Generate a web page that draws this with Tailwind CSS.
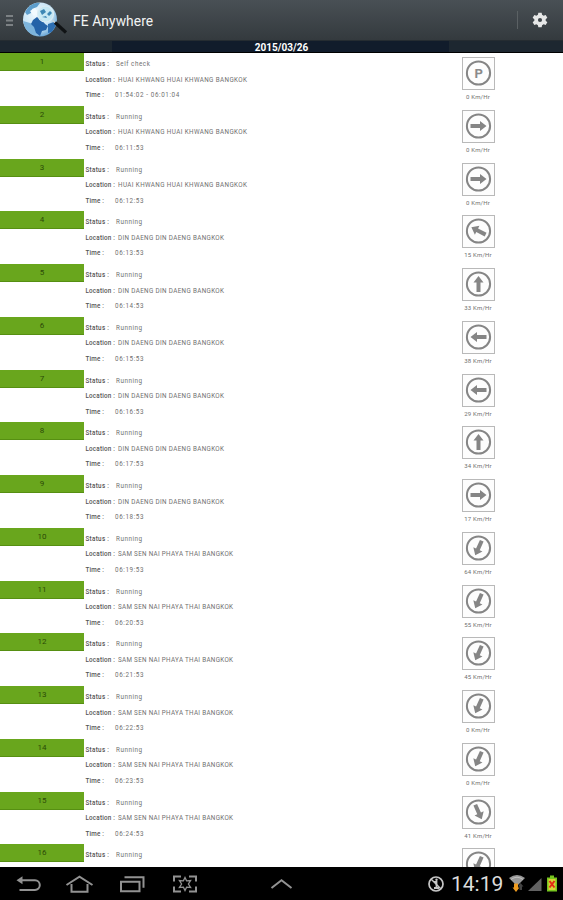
<!DOCTYPE html>
<html lang="en">
<head>
  <meta charset="UTF-8">
  <meta name="viewport" content="width=device-width, initial-scale=1.0">
  <title>FE Anywhere</title>
  <script src="https://cdn.jsdelivr.net/npm/@tailwindcss/browser@4"></script>
</head>
<body class="bg-black h-[900px] w-[563px] overflow-hidden flex flex-col select-none" style="font-family: Roboto, 'Liberation Sans', sans-serif;">
  <!-- Action bar -->
  <header class="h-10 shrink-0 flex items-center bg-linear-to-b from-[#495055] to-[#343a3e]">
    <svg class="ml-1.5 w-[7px] h-[13px] shrink-0" viewBox="0 0 7 13" fill="#7c8184">
      <rect y="1" width="7" height="2"/><rect y="5.5" width="7" height="2"/><rect y="10" width="7" height="2"/>
    </svg>
    <svg class="ml-[9px] w-[46px] h-10 shrink-0" viewBox="0 0 46 40">
      <defs>
        <radialGradient id="globe" cx=".4" cy=".35" r=".7">
          <stop offset="0" stop-color="#f2faff"/><stop offset=".65" stop-color="#c5e2f4"/><stop offset="1" stop-color="#5f9ed0"/>
        </radialGradient>
        <clipPath id="disc"><circle cx="18" cy="19.5" r="17"/></clipPath>
      </defs>
      <circle cx="18" cy="19.5" r="17" fill="url(#globe)"/>
      <g clip-path="url(#disc)">
        <path d="M3 12L7 6l7-4 4 1-3 4-5 2-1 4-4 2z" fill="#5d9dcb"/>
        <path d="M1 21l7 2 5 2 3 4-1 4-4 4-7-5z" fill="#7db4dc"/>
        <path d="M11 20l4-3 5 3 3 4 3 2-2 4-4 1-2 5-4-3-2-6-3-3z" fill="#2563a8"/>
        <path d="M26 24l6-2 2 3-4 7-4 1z" fill="#2e6fb2"/>
        <path d="M8 11l5-3 3 4-4 4z" fill="#f3fafe"/>
      </g>
      <circle cx="23.500" cy="14" r="8" fill="#c3e7f3" fill-opacity=".8" stroke="#dcecf3" stroke-width="1.200"/>
      <path d="M18 11l4-2 2 3-4 3zM25 14l3-3 2 2-3 3zM20 17l4-1 1 2z" fill="#3d87b5"/>
      <path d="M30.500 20.500l3 2.500" stroke="#cbd2d5" stroke-width="1.500"/>
      <path d="M33 22.500L44 32.500" stroke="#101315" stroke-width="3.200"/>
    </svg>
    <h1 class="ml-[5px] text-[13.800px] tracking-[0.1px] leading-none text-[#f2f3f3] whitespace-nowrap pt-[3px]">FE Anywhere</h1>
    <div class="ml-auto w-px h-[18px] bg-[#5b6164]"></div>
    <svg class="ml-[14px] mr-[15px] w-4 h-4 shrink-0" viewBox="0 0 24 24" fill="#e6e7e7">
      <path fill-rule="evenodd" d="M9.500 1h5l.6 3.200 2.300 1.300 3.100-1.100L23 8.700l-2.500 2.100v2.400l2.500 2.100-2.500 4.300-3.100-1.100-2.300 1.300-.6 3.200h-5l-.6-3.200-2.300-1.300-3.100 1.100L1 15.300l2.500-2.100v-2.400L1 8.700l2.500-4.300 3.100 1.100 2.300-1.300zM12 8.900a3.100 3.100 0 1 0 0 6.200 3.100 3.100 0 1 0 0-6.200z"/>
    </svg>
  </header>

  <!-- Date bar -->
  <div class="h-[13px] shrink-0 flex border-t border-[#252c31] border-b border-b-black text-center bg-[#1d2730]">
    <div class="w-28 bg-[#1d2730]"></div>
    <div class="w-[337px] pl-[2px] bg-[#111c2b] text-white text-[10px] font-bold leading-[13px]">2015/03/26</div>
  </div>

  <main id="list" class="h-[814px] shrink-0 overflow-hidden bg-white"></main>

  <!-- System bar -->
  <nav class="h-[33px] shrink-0 flex items-center bg-black">
    <svg class="w-[300px] h-[33px] shrink-0" viewBox="0 0 300 33" fill="none" stroke="#929292" stroke-width="2">
      <path d="M21 13.300h14a3.800 3.800 0 0 1 0 9.600H19.500"/>
      <path d="M16.500 13.300l6-4v8z" fill="#929292" stroke="none"/>
      <path d="M66.500 18L79.500 9.700 92.500 18M71.500 17v7.700h16V17" />
      <path d="M121 14.800h18.500v9.500H121z"/>
      <path d="M124.500 10.300h19v10.500"/>
      <path d="M174 14.500v-5h7M189 9.500h7v5M196 19.500v5h-7M181 24.500h-7v-5"/>
      <path d="M185 10.500l1.600 3.300 4-.3-2.200 3.500 2.200 3.500-4-.3-1.600 3.300-1.600-3.300-4 .3 2.200-3.500-2.200-3.500 4 .3z" stroke-width="1.300"/>
      <path d="M271.500 21L281.500 13.200 291.500 21"/>
    </svg>
    <svg class="ml-[128px] w-4 h-4 shrink-0" viewBox="0 0 16 16" fill="none" stroke="#c6c6c6">
      <circle cx="8" cy="8" r="7" stroke-width="1.700"/>
      <path d="M6 6h2.500v6M6 12h5" stroke-width="1.800"/>
      <path d="M3 3l10 10" stroke-width="1.400"/>
      <circle cx="8.500" cy="3.700" r="1.200" fill="#c6c6c6" stroke="none"/>
    </svg>
    <span class="ml-[7px] w-[53px] text-[21px] leading-none text-[#dcdcdc] whitespace-nowrap pt-[2px]">14:19</span>
    <svg class="ml-[5px] w-[50px] h-[20px] shrink-0" viewBox="0 0 50 20">
      <path d="M0 4Q8 -2 16 4L8 12z" fill="#999"/>
      <path d="M2 5.500Q8 1 14 5.500" fill="none" stroke="#ccc" stroke-width=".8"/>
      <path d="M5 9.500h4v4h1.500L7 18l-3.500-4.500H5z" fill="#ee9b20"/>
      <path d="M11.500 9l3 3.500H13V16h-2.500v-3.500H9z" fill="#444"/>
      <path d="M32.500 4v13H19z" fill="#626262"/>
      <path d="M41 1.500h4v2h3v14H38v-14h3z" fill="#77c51e"/>
      <rect x="39.500" y="5" width="7" height="11" fill="#d9d238"/>
      <path d="M40.500 7l5 6.500M45.500 7l-5 6.500" stroke="#e22a16" stroke-width="2"/>
    </svg>
  </nav>

  <script>
    const HK = 'HUAI KHWANG HUAI KHWANG BANGKOK';
    const DD = 'DIN DAENG DIN DAENG BANGKOK';
    const SS = 'SAM SEN NAI PHAYA THAI BANGKOK';

    // status, location, time, heading in degrees (null = parked), speed
    const rows = [
      ['Self check', HK, '01:54:02 - 06:01:04', null, 0],
      ['Running', HK, '06:11:53', 90, 0],
      ['Running', HK, '06:12:53', 90, 0],
      ['Running', DD, '06:13:53', -63, 15],
      ['Running', DD, '06:14:53', 0, 33],
      ['Running', DD, '06:15:53', -90, 38],
      ['Running', DD, '06:16:53', -90, 29],
      ['Running', DD, '06:17:53', 0, 34],
      ['Running', DD, '06:18:53', 90, 17],
      ['Running', SS, '06:19:53', 204, 64],
      ['Running', SS, '06:20:53', 204, 55],
      ['Running', SS, '06:21:53', 204, 45],
      ['Running', SS, '06:22:53', 204, 0],
      ['Running', SS, '06:23:53', 204, 0],
      ['Running', SS, '06:24:53', 156, 41],
      ['Running', null, null, 204, null]
    ];

    const widths = { [HK]: 129, [DD]: 106, [SS]: 115 };

    document.getElementById('list').innerHTML = rows.map(([status, location, time, heading, speed], i) => {
      const mark = heading === null
        ? '<text x="16.800" y="21" text-anchor="middle" font-size="13" font-weight="700" fill="#8a8a8a">P</text>'
        : `<path transform="rotate(${heading} 16.5 16)" d="M16.500 8l5 6.500h-3V24h-4v-9.500h-3z" fill="#858585"/>`;
      // only the top of the last row fits above the system bar
      const details = time === null ? '' : `
            <div class="flex"><span class="w-[32.500px] font-medium text-[#555] tracking-[0.200px]">Location :</span><svg class="w-[130px] h-[15.500px]" fill="#707070"><text x="0" y="9" textLength="${widths[location]}">${location}</text></svg></div>
            <div class="flex"><span class="w-[29.500px] font-medium text-[#555] tracking-[0.2px]">Time :</span><span class="tracking-[0.600px]">${time}</span></div>`;
      const label = speed === null ? '' : `<span class="mt-[3px] text-[6px] leading-[8px] text-[#707070] tracking-[0.200px] whitespace-nowrap">${speed} Km/Hr</span>`;
      return `
        <section class="h-[52.750px] flex">
          <div class="w-[84px] h-[18px] shrink-0 bg-[#69a61d] border-b border-[#568f12] text-center text-[8px] leading-[17px] text-[#2c4a08]">${i + 1}</div>
          <div class="w-[376px] pl-[1.500px] pt-[4px] text-[6.300px] leading-[15.500px] text-[#707070] whitespace-nowrap">
            <div class="flex"><span class="w-[30.500px] font-medium text-[#555] tracking-[0.300px]">Status :</span><span class="tracking-[0.550px]">${status}</span></div>${details}
          </div>
          <div class="w-9 pt-1 flex flex-col items-center">
            <svg class="w-[33px] h-[33px] shrink-0" viewBox="0 0 33 33">
              <rect x=".5" y=".5" width="32" height="32" fill="#fdfdfd" stroke="#b9b9b9"/>
              <circle cx="16.500" cy="16" r="11.600" fill="none" stroke="#858585" stroke-width="2"/>
              ${mark}
            </svg>
            ${label}
          </div>
        </section>`;
    }).join('');
  </script>
</body>
</html>
